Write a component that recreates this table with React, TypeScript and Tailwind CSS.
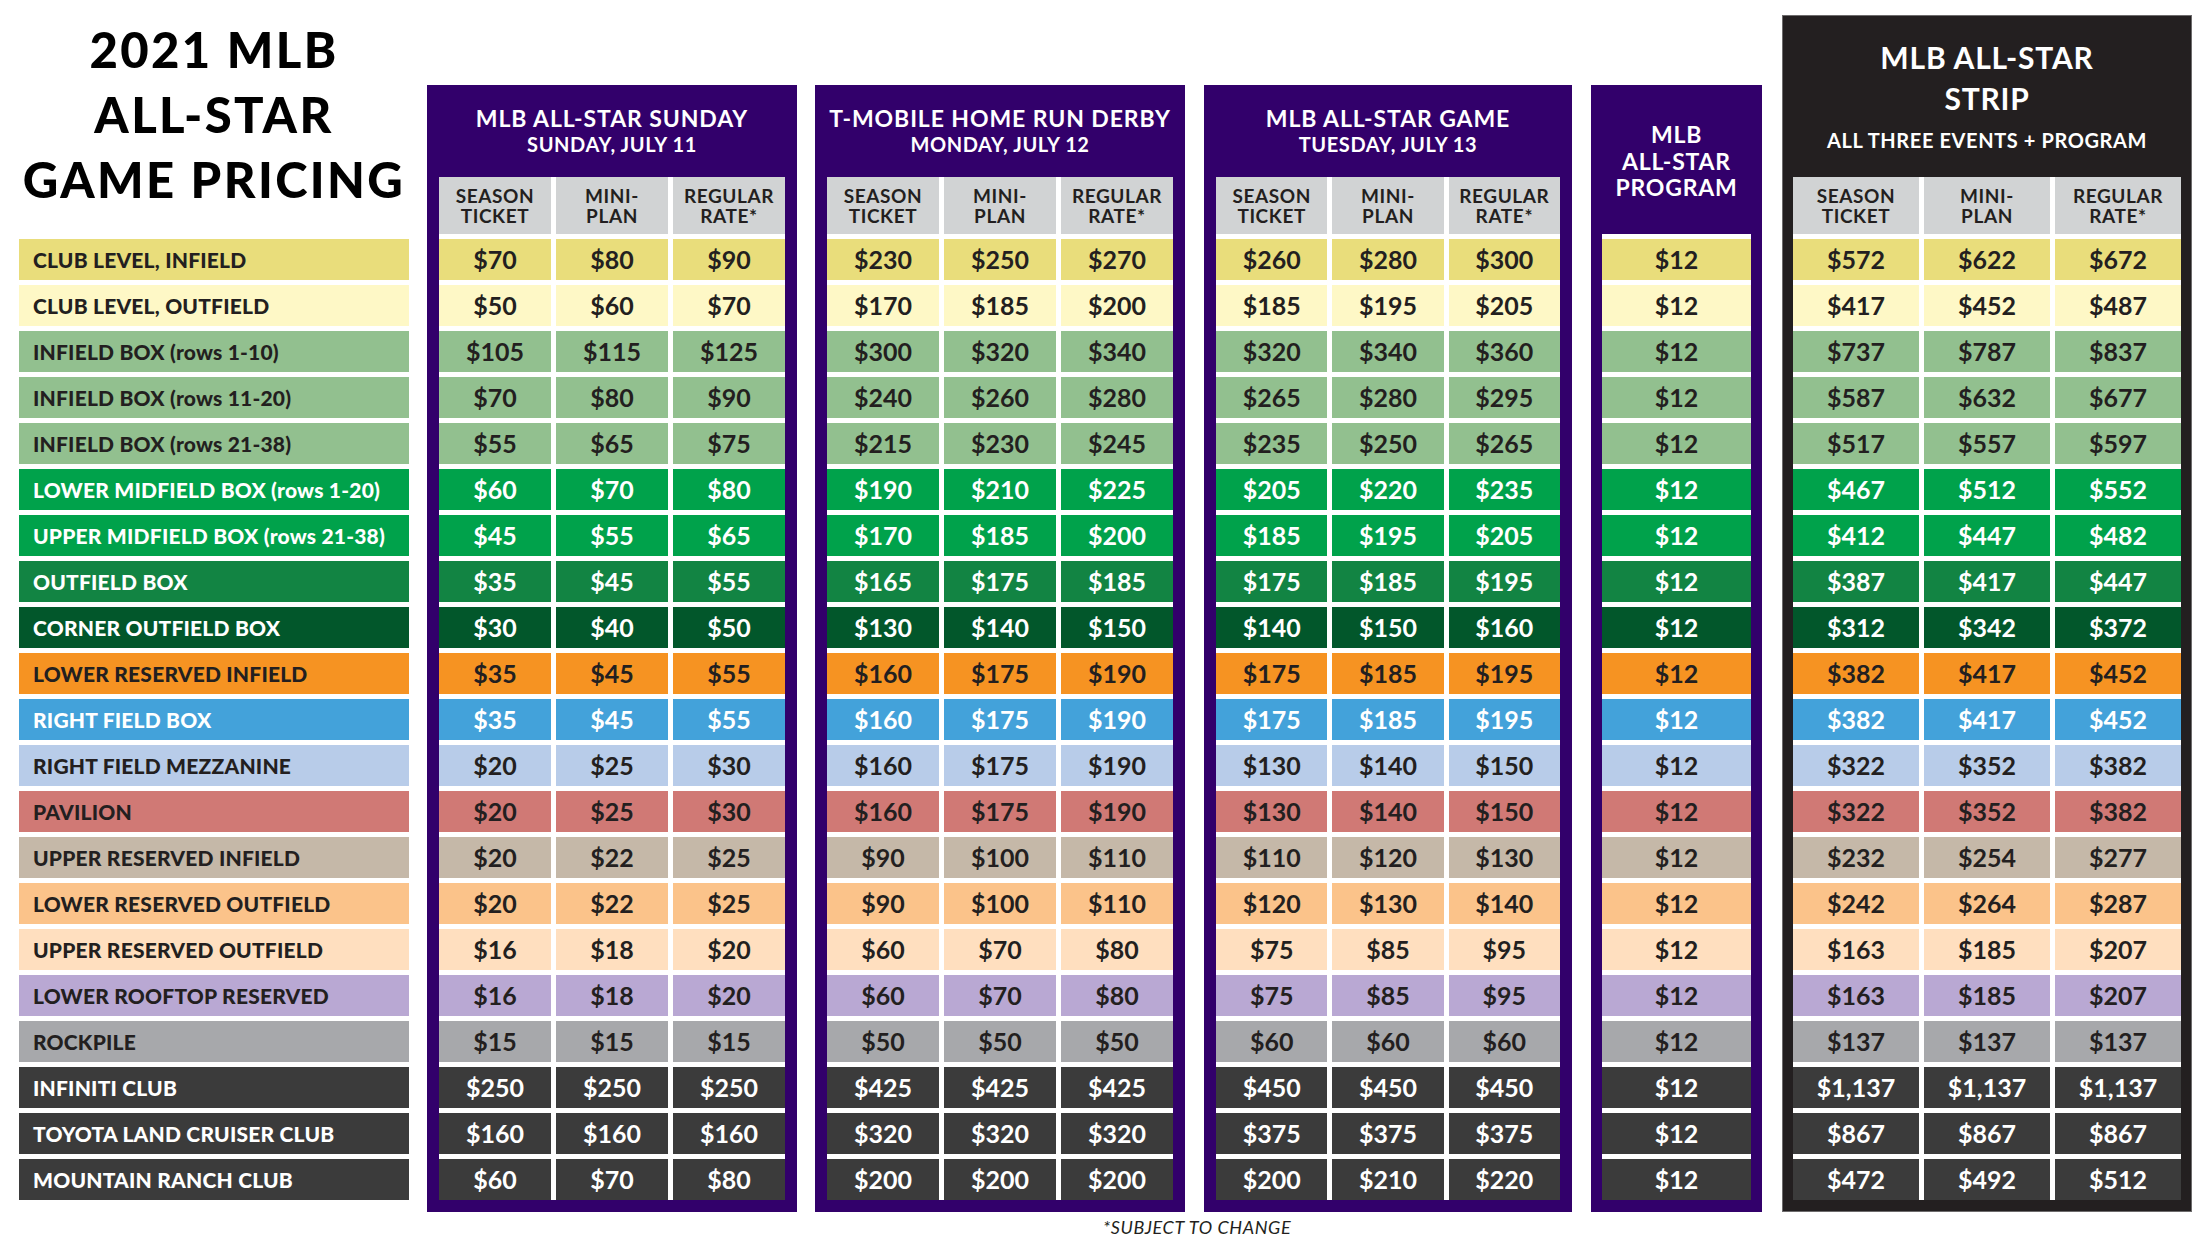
import React from "react";

type Row = {
  name: string;
  bg: string;
  light: boolean;
  sun: string[];
  derby: string[];
  game: string[];
  strip: string[];
};

const rows: Row[] = [
  { name: "CLUB LEVEL, INFIELD", bg: "bg-[#e9dd7b]", light: false, sun: ["$70", "$80", "$90"], derby: ["$230", "$250", "$270"], game: ["$260", "$280", "$300"], strip: ["$572", "$622", "$672"] },
  { name: "CLUB LEVEL, OUTFIELD", bg: "bg-[#fef8c6]", light: false, sun: ["$50", "$60", "$70"], derby: ["$170", "$185", "$200"], game: ["$185", "$195", "$205"], strip: ["$417", "$452", "$487"] },
  { name: "INFIELD BOX (rows 1-10)", bg: "bg-[#92c08f]", light: false, sun: ["$105", "$115", "$125"], derby: ["$300", "$320", "$340"], game: ["$320", "$340", "$360"], strip: ["$737", "$787", "$837"] },
  { name: "INFIELD BOX (rows 11-20)", bg: "bg-[#92c08f]", light: false, sun: ["$70", "$80", "$90"], derby: ["$240", "$260", "$280"], game: ["$265", "$280", "$295"], strip: ["$587", "$632", "$677"] },
  { name: "INFIELD BOX (rows 21-38)", bg: "bg-[#92c08f]", light: false, sun: ["$55", "$65", "$75"], derby: ["$215", "$230", "$245"], game: ["$235", "$250", "$265"], strip: ["$517", "$557", "$597"] },
  { name: "LOWER MIDFIELD BOX (rows 1-20)", bg: "bg-[#00a24b]", light: true, sun: ["$60", "$70", "$80"], derby: ["$190", "$210", "$225"], game: ["$205", "$220", "$235"], strip: ["$467", "$512", "$552"] },
  { name: "UPPER MIDFIELD BOX (rows 21-38)", bg: "bg-[#00a24b]", light: true, sun: ["$45", "$55", "$65"], derby: ["$170", "$185", "$200"], game: ["$185", "$195", "$205"], strip: ["$412", "$447", "$482"] },
  { name: "OUTFIELD BOX", bg: "bg-[#128443]", light: true, sun: ["$35", "$45", "$55"], derby: ["$165", "$175", "$185"], game: ["$175", "$185", "$195"], strip: ["$387", "$417", "$447"] },
  { name: "CORNER OUTFIELD BOX", bg: "bg-[#02572b]", light: true, sun: ["$30", "$40", "$50"], derby: ["$130", "$140", "$150"], game: ["$140", "$150", "$160"], strip: ["$312", "$342", "$372"] },
  { name: "LOWER RESERVED INFIELD", bg: "bg-[#f69322]", light: false, sun: ["$35", "$45", "$55"], derby: ["$160", "$175", "$190"], game: ["$175", "$185", "$195"], strip: ["$382", "$417", "$452"] },
  { name: "RIGHT FIELD BOX", bg: "bg-[#43a2da]", light: true, sun: ["$35", "$45", "$55"], derby: ["$160", "$175", "$190"], game: ["$175", "$185", "$195"], strip: ["$382", "$417", "$452"] },
  { name: "RIGHT FIELD MEZZANINE", bg: "bg-[#b8cce9]", light: false, sun: ["$20", "$25", "$30"], derby: ["$160", "$175", "$190"], game: ["$130", "$140", "$150"], strip: ["$322", "$352", "$382"] },
  { name: "PAVILION", bg: "bg-[#d07975]", light: false, sun: ["$20", "$25", "$30"], derby: ["$160", "$175", "$190"], game: ["$130", "$140", "$150"], strip: ["$322", "$352", "$382"] },
  { name: "UPPER RESERVED INFIELD", bg: "bg-[#c5b8a8]", light: false, sun: ["$20", "$22", "$25"], derby: ["$90", "$100", "$110"], game: ["$110", "$120", "$130"], strip: ["$232", "$254", "$277"] },
  { name: "LOWER RESERVED OUTFIELD", bg: "bg-[#fbc38a]", light: false, sun: ["$20", "$22", "$25"], derby: ["$90", "$100", "$110"], game: ["$120", "$130", "$140"], strip: ["$242", "$264", "$287"] },
  { name: "UPPER RESERVED OUTFIELD", bg: "bg-[#ffdfbf]", light: false, sun: ["$16", "$18", "$20"], derby: ["$60", "$70", "$80"], game: ["$75", "$85", "$95"], strip: ["$163", "$185", "$207"] },
  { name: "LOWER ROOFTOP RESERVED", bg: "bg-[#b9a8d3]", light: false, sun: ["$16", "$18", "$20"], derby: ["$60", "$70", "$80"], game: ["$75", "$85", "$95"], strip: ["$163", "$185", "$207"] },
  { name: "ROCKPILE", bg: "bg-[#a7a8ab]", light: false, sun: ["$15", "$15", "$15"], derby: ["$50", "$50", "$50"], game: ["$60", "$60", "$60"], strip: ["$137", "$137", "$137"] },
  { name: "INFINITI CLUB", bg: "bg-[#3b3b3b]", light: true, sun: ["$250", "$250", "$250"], derby: ["$425", "$425", "$425"], game: ["$450", "$450", "$450"], strip: ["$1,137", "$1,137", "$1,137"] },
  { name: "TOYOTA LAND CRUISER CLUB", bg: "bg-[#3b3b3b]", light: true, sun: ["$160", "$160", "$160"], derby: ["$320", "$320", "$320"], game: ["$375", "$375", "$375"], strip: ["$867", "$867", "$867"] },
  { name: "MOUNTAIN RANCH CLUB", bg: "bg-[#3b3b3b]", light: true, sun: ["$60", "$70", "$80"], derby: ["$200", "$200", "$200"], game: ["$200", "$210", "$220"], strip: ["$472", "$492", "$512"] },
];

const Cell = ({ row, value }: { row: Row; value: string }) => (
  <div
    className={`${row.bg} ${row.light ? "text-white" : "text-[#231f20]"} h-[41px] flex items-center justify-center text-[25px] font-bold leading-none`}
  >
    {value}
  </div>
);

const ColHeads = () => (
  <>
    {["SEASON|TICKET", "MINI-|PLAN", "REGULAR|RATE*"].map((h) => (
      <div
        key={h}
        className="h-[57px] bg-[#d1d3d4] text-[#231f20] flex flex-col items-center justify-center text-[19px] leading-[20px] font-bold tracking-[0.6px]"
      >
        {h.split("|").map((l) => (
          <span key={l}>{l}</span>
        ))}
      </div>
    ))}
  </>
);

const EventPanel = ({
  title,
  date,
  field,
  className,
}: {
  title: string;
  date: string;
  field: "sun" | "derby" | "game";
  className: string;
}) => (
  <div className={`${className} mt-[85px] h-[1127px] bg-[#32006b] px-[12px] flex flex-col`}>
    <div className="h-[92px] pt-[20px] text-white text-center font-bold">
      <p className="text-[23px] leading-[26px] tracking-[0.9px]">{title}</p>
      <p className="text-[20px] leading-[26px] tracking-[0.6px]">{date}</p>
    </div>
    <div className="grid grid-cols-3 gap-[5px] bg-white">
      <ColHeads />
      {rows.map((r) =>
        r[field].map((v, i) => <Cell key={r.name + i} row={r} value={v} />)
      )}
    </div>
  </div>
);

export default function App() {
  return (
    <div className="w-[2208px] h-[1242px] bg-white font-['Lato','Liberation_Sans',sans-serif] flex flex-col overflow-hidden">
      <div className="flex items-start pl-[19px]">
        {/* row names */}
        <div className="w-[390px] flex flex-col">
          <div className="h-[239px] pt-[17px] text-center text-black font-black text-[49px] leading-[65px] tracking-[2.4px]">
            <p>2021 MLB</p>
            <p>ALL-STAR</p>
            <p>GAME PRICING</p>
          </div>
          <div className="flex flex-col gap-[5px]">
            {rows.map((r) => (
              <div
                key={r.name}
                className={`${r.bg} ${r.light ? "text-white" : "text-[#231f20]"} h-[41px] flex items-center pl-[14px] text-[21px] font-black tracking-[0.2px]`}
              >
                {r.name}
              </div>
            ))}
          </div>
        </div>

        <EventPanel className="ml-[18px] w-[370px]" title="MLB ALL-STAR SUNDAY" date="SUNDAY, JULY 11" field="sun" />
        <EventPanel className="ml-[18px] w-[370px]" title="T-MOBILE HOME RUN DERBY" date="MONDAY, JULY 12" field="derby" />
        <EventPanel className="ml-[19px] w-[368px]" title="MLB ALL-STAR GAME" date="TUESDAY, JULY 13" field="game" />

        {/* program */}
        <div className="ml-[19px] w-[171px] mt-[85px] h-[1127px] bg-[#32006b] px-[11px] flex flex-col">
          <div className="h-[149px] pt-[36px] text-white text-center font-bold text-[23px] leading-[26.5px] tracking-[0.8px]">
            <p>MLB</p>
            <p>ALL-STAR</p>
            <p>PROGRAM</p>
          </div>
          <div className="flex flex-col gap-[5px] pt-[5px] bg-white">
            {rows.map((r) => (
              <Cell key={r.name} row={r} value="$12" />
            ))}
          </div>
        </div>

        {/* strip */}
        <div className="ml-[20px] w-[410px] mt-[15px] h-[1197px] bg-[#231f20] border border-[#6d6b6c] px-[10px] flex flex-col">
          <div className="h-[161px] pt-[21px] text-white text-center font-bold">
            <p className="text-[30px] leading-[41px] tracking-[0.8px]">MLB ALL-STAR</p>
            <p className="text-[30px] leading-[41px] tracking-[0.8px]">STRIP</p>
            <p className="mt-[8px] text-[20px] leading-[26px] tracking-[0.6px]">ALL THREE EVENTS + PROGRAM</p>
          </div>
          <div className="grid grid-cols-3 gap-[5px] bg-white">
            <ColHeads />
            {rows.map((r) =>
              r.strip.map((v, i) => <Cell key={r.name + i} row={r} value={v} />)
            )}
          </div>
        </div>
      </div>

      <p className="ml-[1103px] mt-[2px] text-[18px] italic text-[#231f20] leading-[26px] tracking-[0.6px]">*SUBJECT TO CHANGE</p>
    </div>
  );
}
